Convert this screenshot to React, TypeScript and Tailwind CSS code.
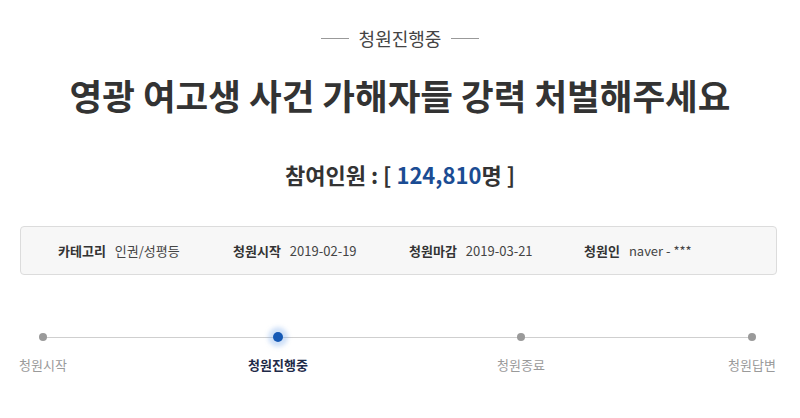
import React from "react";

const font = { fontFamily: '"Noto Sans CJK KR", "Noto Sans", sans-serif' };

function Step({ label, active, ml }: { label: string; active?: boolean; ml: string }) {
  return (
    <div className={`flex w-[60px] flex-col items-center ${ml}`}>
      <div className="flex h-[20px] items-center justify-center">
        {active ? (
          <div className="h-[10px] w-[10px] rounded-full bg-[#1559b5] shadow-[0_0_4px_5px_rgba(120,170,235,0.35)]" />
        ) : (
          <div className="h-[8px] w-[8px] rounded-full bg-[#9a9a9a]" />
        )}
      </div>
      <div
        className={`mt-[8px] whitespace-nowrap text-[13px] leading-[20px] ${
          active ? "font-bold text-[#1e2a48]" : "text-[#9a9a9a]"
        }`}
      >
        {label}
      </div>
    </div>
  );
}

export default function App() {
  return (
    <div className="h-[418px] w-[800px] overflow-hidden bg-white" style={font}>
      <div className="flex flex-col items-center pt-[27px]">
        <div className="flex items-center gap-[10px] text-[18px] leading-[22px] text-[#444]">
          <span className="h-px w-[28px] bg-[#999]" />
          <span>청원진행중</span>
          <span className="h-px w-[28px] bg-[#999]" />
        </div>
        <h1 className="mt-[23px] text-[35.5px] font-bold leading-[46px] text-[#333]">
          영광 여고생 사건 가해자들 강력 처벌해주세요
        </h1>
        <div className="mt-[41px] text-[22px] font-bold leading-[30px] text-[#333]">
          참여인원 : [ <span className="text-[#1b4c93]">124,810</span>명 ]
        </div>
      </div>

      <div className="ml-[20px] mt-[37px] flex h-[49px] w-[757px] items-center rounded-[4px] border border-[#dcdcdc] bg-[#f7f7f7] pl-[37px] text-[13px] text-[#333]">
        <div className="grid grid-cols-[175px_176px_175px_auto] items-center">
          <div className="flex gap-[9px]">
            <span className="font-bold">카테고리</span>
            <span className="text-[#444]">인권/성평등</span>
          </div>
          <div className="flex gap-[9px]">
            <span className="font-bold">청원시작</span>
            <span className="text-[#444]">2019-02-19</span>
          </div>
          <div className="flex gap-[9px]">
            <span className="font-bold">청원마감</span>
            <span className="text-[#444]">2019-03-21</span>
          </div>
          <div className="flex gap-[9px]">
            <span className="font-bold">청원인</span>
            <span className="text-[#444]">naver - ***</span>
          </div>
        </div>
      </div>

      <div className="relative mt-[52px] flex">
        <div className="absolute left-[43px] top-[9.5px] h-px w-[709px] bg-[#cfcfcf]" />
        <div className="relative flex">
          <Step label="청원시작" ml="ml-[13px]" />
          <Step label="청원진행중" active ml="ml-[175px]" />
          <Step label="청원종료" ml="ml-[183px]" />
          <Step label="청원답변" ml="ml-[171px]" />
        </div>
      </div>
    </div>
  );
}
